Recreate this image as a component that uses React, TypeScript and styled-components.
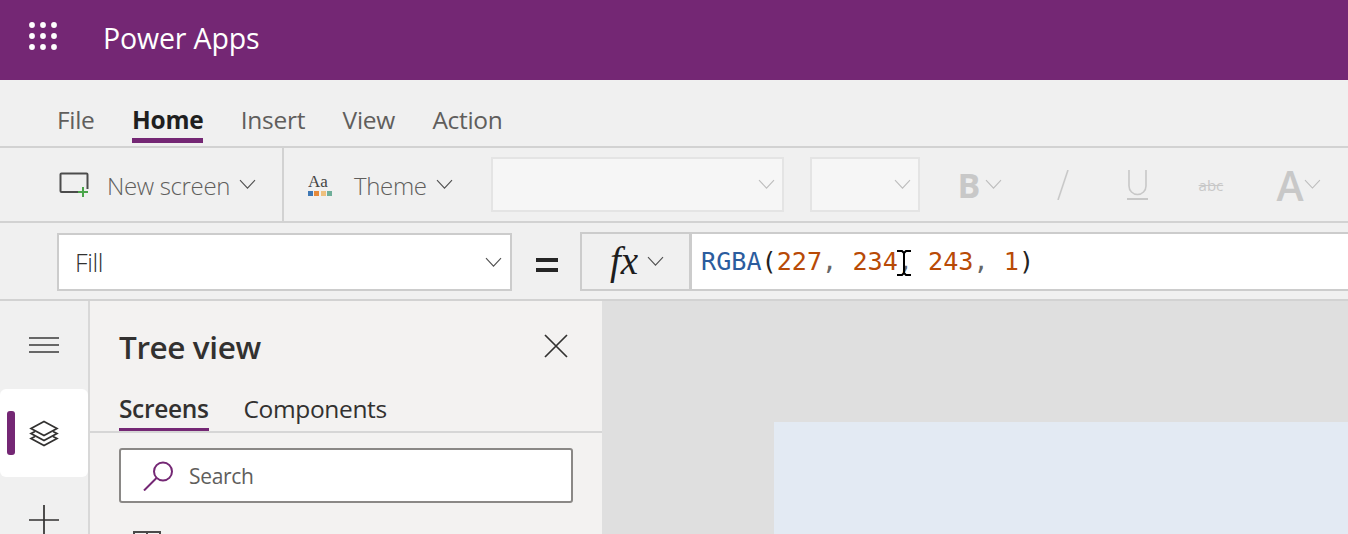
import styled, { createGlobalStyle } from "styled-components";

const GlobalStyle = createGlobalStyle`
  html, body {
    margin: 0;
    padding: 0;
    background: #f0f0f0;
    font-family: "Open Sans", "Noto Sans", sans-serif;
  }
`;

const Page = styled.div`
  display: flex;
  flex-direction: column;
  width: 1348px;
  height: 534px;
  overflow: hidden;
`;

const Header = styled.header`
  display: flex;
  align-items: center;
  flex: 0 0 80px;
  padding: 0 0 4px 29px;
  box-sizing: border-box;
  background: #742774;
  color: #fff;
`;

const WaffleSlot = styled.div`
  display: flex;
  margin-bottom: 5px;
`;

const AppName = styled.div`
  margin-left: 46px;
  font-size: 28.5px;
  font-weight: 500;
  letter-spacing: -0.15px;
`;

const TabBar = styled.nav`
  display: flex;
  gap: 37.5px;
  flex: 0 0 68px;
  padding: 0 0 0 57px;
  box-sizing: border-box;
  align-items: flex-end;
  border-bottom: 2px solid #d2d2d2;
`;

const Tab = styled.div<{ $active?: boolean }>`
  height: 43px;
  margin-bottom: 3px;
  box-sizing: border-box;
  font-size: 24.5px;
  line-height: 39px;
  font-weight: ${(p) => (p.$active ? 700 : 400)};
  color: ${(p) => (p.$active ? "#1f1f1f" : "#605e5c")};
  border-bottom: ${(p) => (p.$active ? "5px solid #742774" : "none")};
  letter-spacing: -0.3px;
`;

const Ribbon = styled.div`
  display: flex;
  align-items: center;
  flex: 0 0 75px;
  box-sizing: border-box;
  border-bottom: 2px solid #d2d2d2;
`;

const RibbonGroup = styled.div<{ $width: number; $pad: number; $divider?: boolean }>`
  display: flex;
  align-items: center;
  width: ${(p) => p.$width}px;
  height: 100%;
  padding-left: ${(p) => p.$pad}px;
  box-sizing: border-box;
  border-right: ${(p) => (p.$divider ? "2px solid #d2d2d2" : "none")};
`;

const RibbonLabel = styled.span<{ $left: number }>`
  margin-left: ${(p) => p.$left}px;
  margin-right: 9px;
  padding-top: 2px;
  font-size: 24px;
  font-weight: 300;
  letter-spacing: -0.35px;
  color: #605e5c;
`;

const DisabledSelect = styled.div<{ $width: number; $left: number }>`
  display: flex;
  align-items: center;
  justify-content: flex-end;
  width: ${(p) => p.$width}px;
  height: 55px;
  margin-left: ${(p) => p.$left}px;
  padding-right: 7px;
  box-sizing: border-box;
  border: 2px solid #e4e4e4;
  background: #f6f6f6;
`;

const DisabledTool = styled.div<{ $width: number; $left: number }>`
  display: flex;
  align-items: center;
  justify-content: space-between;
  width: ${(p) => p.$width}px;
  margin-left: ${(p) => p.$left}px;
  color: #c8c8c8;
`;

const BoldGlyph = styled.span`
  font-size: 34px;
  line-height: 40px;
  font-weight: 700;
`;

const LargeGlyph = styled.span`
  font-size: 41px;
  line-height: 44px;
  font-weight: 600;
`;

const StruckGlyph = styled.span`
  font-size: 15px;
  text-decoration: line-through;
`;

const FormulaBar = styled.div`
  display: flex;
  align-items: center;
  flex: 0 0 78px;
  padding-left: 57px;
  box-sizing: border-box;
  border-bottom: 2px solid #d2d2d2;
`;

const PropertySelect = styled.div`
  display: flex;
  align-items: center;
  justify-content: space-between;
  width: 455px;
  height: 58px;
  margin-top: 2px;
  padding: 0 8px 0 16px;
  box-sizing: border-box;
  border: 2px solid #cccccc;
  background: #fff;
  font-size: 25px;
  font-weight: 300;
  letter-spacing: -0.4px;
  color: #323130;
`;

const Equals = styled.div`
  display: flex;
  flex-direction: column;
  gap: 6px;
  width: 22px;
  margin: 8px 22px 0 24px;

  &::before,
  &::after {
    content: "";
    height: 4px;
    background: #252525;
  }
`;

const FxButton = styled.div`
  display: flex;
  align-items: center;
  justify-content: center;
  gap: 9px;
  width: 110px;
  height: 59px;
  padding-left: 3px;
  box-sizing: border-box;
  border: 2px solid #cccccc;
  border-right-width: 1px;
  background: #f0f0f0;
`;

const FxLabel = styled.span`
  font-family: "Liberation Serif", serif;
  font-style: italic;
  font-size: 39px;
  line-height: 40px;
  color: #1d1d1d;
`;

const FormulaInput = styled.div`
  position: relative;
  flex: 1;
  display: flex;
  align-items: center;
  height: 59px;
  padding-left: 9px;
  box-sizing: border-box;
  border: 2px solid #cccccc;
  border-right: none;
  background: #fff;
  font-family: "DejaVu Sans Mono", "Liberation Mono", monospace;
  font-size: 25.15px;
  white-space: pre;
`;

const Code = styled.span<{ $color: string }>`
  color: ${(p) => p.$color};
`;

const TextCursor = styled.svg`
  position: absolute;
  left: 204px;
  top: 16px;
`;

const Workspace = styled.div`
  display: flex;
  flex: 1;
  min-height: 0;
`;

const Rail = styled.aside`
  display: flex;
  flex-direction: column;
  align-items: stretch;
  flex: 0 0 90px;
  box-sizing: border-box;
  border-right: 2px solid #d8d8d8;
`;

const RailSlot = styled.div<{ $height: number; $active?: boolean }>`
  position: relative;
  display: flex;
  align-items: center;
  justify-content: center;
  flex: 0 0 ${(p) => p.$height}px;
  background: ${(p) => (p.$active ? "#fff" : "transparent")};
  border-radius: 6px;
`;

const RailMarker = styled.span`
  position: absolute;
  left: 7px;
  top: 22px;
  width: 8px;
  height: 44px;
  border-radius: 3px;
  background: #742774;
`;

const Panel = styled.section`
  display: flex;
  flex-direction: column;
  flex: 0 0 512px;
  overflow: hidden;
  background: #f3f2f1;
  color: #323130;

  & > * {
    flex-shrink: 0;
  }
`;

const PanelHeader = styled.div`
  display: flex;
  align-items: center;
  justify-content: space-between;
  height: 89px;
  padding: 2px 34px 0 29px;
  box-sizing: border-box;
`;

const PanelTitle = styled.h2`
  margin: 0;
  font-size: 31.5px;
  font-weight: 600;
  letter-spacing: -0.4px;
`;

const CloseSlot = styled.div`
  display: flex;
  margin-top: -2px;
`;

const PanelTabs = styled.div`
  display: flex;
  gap: 35px;
  height: 43px;
  padding-left: 29px;
  box-sizing: border-box;
  border-bottom: 2px solid #d6d6d6;
`;

const PanelTab = styled.div<{ $active?: boolean }>`
  height: 41px;
  box-sizing: border-box;
  font-size: 24.5px;
  line-height: 38px;
  letter-spacing: -0.35px;
  font-weight: ${(p) => (p.$active ? 600 : 400)};
  border-bottom: ${(p) => (p.$active ? "3px solid #742774" : "none")};
`;

const SearchBox = styled.div`
  display: flex;
  align-items: center;
  gap: 15px;
  width: 454px;
  height: 55px;
  margin: 15px 0 0 29px;
  padding-left: 22px;
  box-sizing: border-box;
  border: 2px solid #8a8886;
  border-radius: 3px;
  background: #fff;
  font-size: 21px;
  letter-spacing: -0.3px;
  color: #605e5c;
`;

const TreeRow = styled.div`
  margin: 28px 0 0 43px;
`;

const Canvas = styled.main`
  display: flex;
  flex: 1;
  padding: 121px 0 0 172px;
  background: #dfdfdf;
`;

const Artboard = styled.div`
  flex: 1;
  background: #e3eaf3;
`;

const Chevron = ({ size = 17, color = "#505050" }: { size?: number; color?: string }) => (
  <svg width={size} height={size * 0.6} viewBox="0 0 17 10" fill="none" stroke={color} strokeWidth="1.1">
    <path d="M1 1l7.5 8L16 1" />
  </svg>
);

const Waffle = () => (
  <svg width="28" height="28" viewBox="0 0 28 28" fill="#fff">
    {[3, 14, 25].flatMap((y) =>
      [3, 14, 25].map((x) => <circle key={`${x}-${y}`} cx={x} cy={y} r="2.9" />)
    )}
  </svg>
);

const NewScreenIcon = () => (
  <svg width="30" height="26" viewBox="0 0 30 26" fill="none">
    <path d="M24 20H2.5a1 1 0 0 1-1-1V2.5a1 1 0 0 1 1-1h25a1 1 0 0 1 1 1V17" stroke="#4c4c4c" strokeWidth="2" />
    <path d="M24 15v10M19 20h10" stroke="#4aa54a" strokeWidth="2" />
  </svg>
);

const ThemeIcon = () => (
  <svg width="25" height="24" viewBox="0 0 25 24">
    <text x="0" y="14" fontFamily="Liberation Serif, serif" fontSize="17" fill="#444">
      Aa
    </text>
    <rect x="0" y="18" width="5" height="5" fill="#3f78b5" />
    <rect x="6" y="18" width="5" height="5" fill="#e58a3c" />
    <rect x="13" y="18" width="5" height="5" fill="#eec07f" />
    <rect x="19" y="18" width="5" height="5" fill="#6fae99" />
  </svg>
);

const ItalicTool = () => (
  <svg width="12" height="30" viewBox="0 0 12 30" stroke="#c8c8c8" strokeWidth="1.6">
    <path d="M11 0L1 30" />
  </svg>
);

const UnderlineTool = () => (
  <svg width="21" height="30" viewBox="0 0 21 30" fill="none" stroke="#c8c8c8" strokeWidth="1.6">
    <path d="M2 0v16a8.500 8.500 0 0 0 17 0V0" />
    <path d="M0 29h21" strokeWidth="2" />
  </svg>
);

const Hamburger = () => (
  <svg width="30" height="16" viewBox="0 0 30 16" stroke="#3a3a3a" strokeWidth="1.6">
    <path d="M0 1h30M0 8h30M0 15h30" />
  </svg>
);

const LayersIcon = () => (
  <svg width="30" height="27" viewBox="0 0 30 27" fill="none" stroke="#323130" strokeWidth="1.7">
    <path d="M15 1.500L28 8.500 15 15.500 2 8.500z" />
    <path d="M6 11.500L2 13.500 15 20.500 28 13.500 24 11.500" />
    <path d="M6 16.500L2 18.500 15 25.500 28 18.500 24 16.500" />
  </svg>
);

const PlusIcon = () => (
  <svg width="30" height="30" viewBox="0 0 30 30" stroke="#323130" strokeWidth="1.7">
    <path d="M15 0v30M0 15h30" />
  </svg>
);

const CloseIcon = () => (
  <svg width="24" height="24" viewBox="0 0 24 24" stroke="#323130" strokeWidth="1.7">
    <path d="M1 1l22 22M23 1L1 23" />
  </svg>
);

const SearchIcon = () => (
  <svg width="31" height="30" viewBox="0 0 31 30" fill="none" stroke="#742774" strokeWidth="2">
    <circle cx="20" cy="10.500" r="9" />
    <path d="M13.500 17L1 29.500" />
  </svg>
);

const TableIcon = () => (
  <svg width="28" height="20" viewBox="0 0 28 20" fill="none" stroke="#4a4a4a" strokeWidth="2">
    <path d="M1 1h26v18H1zM1 8h26M14 1v18" />
  </svg>
);

export default function App() {
  return (
    <Page>
      <GlobalStyle />
      <Header>
        <WaffleSlot>
          <Waffle />
        </WaffleSlot>
        <AppName>Power Apps</AppName>
      </Header>

      <TabBar>
        <Tab>File</Tab>
        <Tab $active>Home</Tab>
        <Tab>Insert</Tab>
        <Tab>View</Tab>
        <Tab>Action</Tab>
      </TabBar>

      <Ribbon>
        <RibbonGroup $width={284} $pad={59} $divider>
          <NewScreenIcon />
          <RibbonLabel $left={18}>New screen</RibbonLabel>
          <Chevron />
        </RibbonGroup>
        <RibbonGroup $width={1064} $pad={24}>
          <ThemeIcon />
          <RibbonLabel $left={21}>Theme</RibbonLabel>
          <Chevron />
          <DisabledSelect $width={293} $left={38}>
            <Chevron color="#bdbdbd" />
          </DisabledSelect>
          <DisabledSelect $width={110} $left={26}>
            <Chevron color="#bdbdbd" />
          </DisabledSelect>
          <DisabledTool $width={44} $left={38}>
            <BoldGlyph>B</BoldGlyph>
            <Chevron color="#bdbdbd" />
          </DisabledTool>
          <DisabledTool $width={12} $left={55}>
            <ItalicTool />
          </DisabledTool>
          <DisabledTool $width={21} $left={58}>
            <UnderlineTool />
          </DisabledTool>
          <DisabledTool $width={29} $left={51}>
            <StruckGlyph>abc</StruckGlyph>
          </DisabledTool>
          <DisabledTool $width={44} $left={49}>
            <LargeGlyph>A</LargeGlyph>
            <Chevron color="#bdbdbd" />
          </DisabledTool>
        </RibbonGroup>
      </Ribbon>

      <FormulaBar>
        <PropertySelect>
          Fill
          <Chevron />
        </PropertySelect>
        <Equals />
        <FxButton>
          <FxLabel>fx</FxLabel>
          <Chevron />
        </FxButton>
        <FormulaInput>
          <Code $color="#2b5c9e">RGBA</Code>
          <Code $color="#222">(</Code>
          <Code $color="#b84a06">227</Code>
          <Code $color="#666">, </Code>
          <Code $color="#b84a06">234</Code>
          <Code $color="#666">, </Code>
          <Code $color="#b84a06">243</Code>
          <Code $color="#666">, </Code>
          <Code $color="#b84a06">1</Code>
          <Code $color="#222">)</Code>
          <TextCursor width="16" height="26" viewBox="0 0 16 26" fill="none" stroke="#000" strokeWidth="2">
            <path d="M1 1h5l2 2 2-2h5M8 3v20M1 25h5l2-2 2 2h5" />
          </TextCursor>
        </FormulaInput>
      </FormulaBar>

      <Workspace>
        <Rail>
          <RailSlot $height={88}>
            <Hamburger />
          </RailSlot>
          <RailSlot $height={88} $active>
            <RailMarker />
            <LayersIcon />
          </RailSlot>
          <RailSlot $height={86}>
            <PlusIcon />
          </RailSlot>
        </Rail>

        <Panel>
          <PanelHeader>
            <PanelTitle>Tree view</PanelTitle>
            <CloseSlot>
              <CloseIcon />
            </CloseSlot>
          </PanelHeader>
          <PanelTabs>
            <PanelTab $active>Screens</PanelTab>
            <PanelTab>Components</PanelTab>
          </PanelTabs>
          <SearchBox>
            <SearchIcon />
            Search
          </SearchBox>
          <TreeRow>
            <TableIcon />
          </TreeRow>
        </Panel>

        <Canvas>
          <Artboard />
        </Canvas>
      </Workspace>
    </Page>
  );
}
